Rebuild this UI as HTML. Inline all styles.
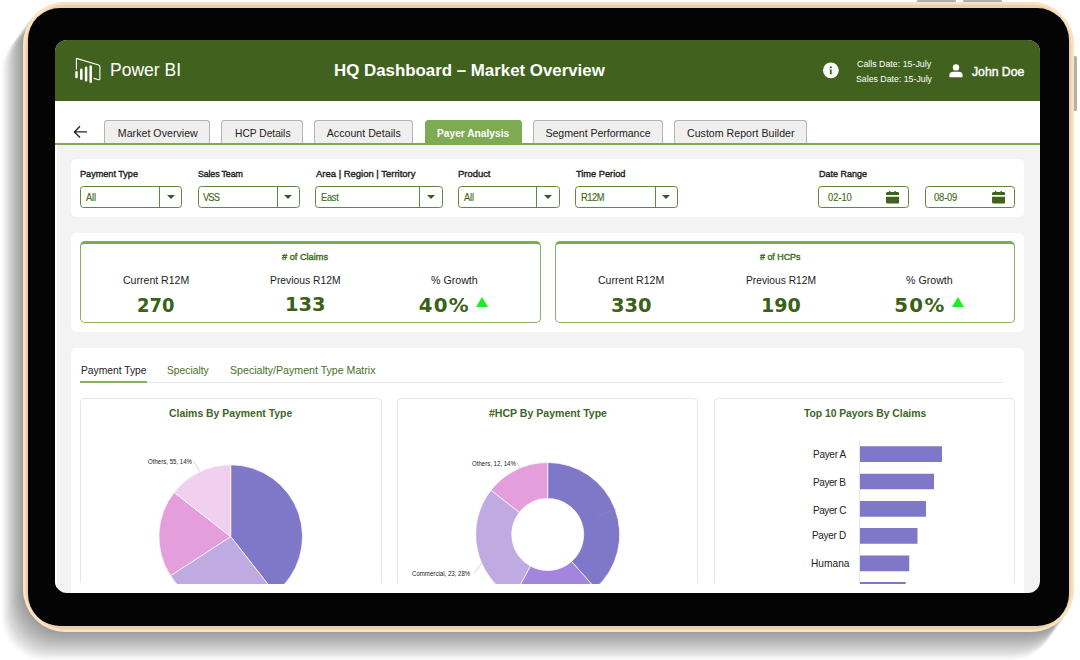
<!DOCTYPE html>
<html lang="en">
<head>
<meta charset="utf-8">
<title>HQ Dashboard – Market Overview</title>
<style>

html,body{margin:0;padding:0;background:#fff}
body{width:1080px;height:660px;position:relative;overflow:hidden;font-family:"Liberation Sans", sans-serif;}
.abs{position:absolute}
.btn{position:absolute;background:#b0b0b0}
.tablet{position:absolute;left:22.5px;top:2px;width:1051.5px;height:629.5px;border-radius:43px;background:#e9d1ae;
  box-shadow:inset 0 0 0 2.6px #fae2c1,-1.4px 1.9px 1.5px rgba(0,0,0,.033),-2.9px 3.9px 1.5px rgba(0,0,0,.033),-4.3px 5.8px 1.5px rgba(0,0,0,.033),-5.8px 7.8px 1.5px rgba(0,0,0,.033),-7.2px 9.8px 1.5px rgba(0,0,0,.033),-8.7px 11.7px 1.5px rgba(0,0,0,.033),-10.2px 13.7px 1.5px rgba(0,0,0,.033),-11.6px 15.6px 1.5px rgba(0,0,0,.033),-13.0px 17.6px 1.5px rgba(0,0,0,.033),-14.5px 19.5px 1.5px rgba(0,0,0,.033),-15.9px 21.4px 1.5px rgba(0,0,0,.033),-17.4px 23.4px 1.5px rgba(0,0,0,.033),-18.8px 25.3px 1.5px rgba(0,0,0,.033),-20.3px 27.3px 1.5px rgba(0,0,0,.033);}
.bezel{position:absolute;left:27.5px;top:7.5px;width:1041.5px;height:618.5px;border-radius:32px;background:#040404}
.screen{position:absolute;left:55px;top:40px;width:985px;height:553px;border-radius:12px;overflow:hidden;background:#f3f3f3}
.screen *{box-sizing:border-box}
.tx{position:absolute;white-space:nowrap;line-height:1;margin:0;padding:0;transform-origin:0 50%}
.hdr{position:absolute;left:0;top:0;width:985px;height:60.7px;background:#41621f}
.nav{position:absolute;left:0;top:60.7px;width:985px;height:44px;background:#fff}
.navline{position:absolute;left:0;top:103px;width:985px;height:2px;background:#7dab52}
.tab{position:absolute;top:80px;height:24px;border:1px solid #b3b3b3;border-bottom:none;border-radius:3.5px 3.5px 0 0;background:#f0efee}
.tab.on{background:#7dab52;border-color:#7dab52}
.card{position:absolute;background:#fff;border-radius:5px}
.dd{position:absolute;top:146.3px;height:21.6px;border:1px solid #5d8a3a;border-radius:3.5px;background:#fff}
.dd i{position:absolute;top:0;bottom:0;width:1px;background:#5d8a3a}
.dd b{position:absolute;width:0;height:0;border-left:4.1px solid transparent;border-right:4.1px solid transparent;border-top:4.7px solid #3a5c1c}
.kpi{position:absolute;top:200.5px;height:82.2px;border:1px solid #86b15f;border-top:3px solid #7dab52;border-radius:5px;background:#fff}
.tri{position:absolute;width:0;height:0;border-left:6px solid transparent;border-right:6px solid transparent;border-bottom:10px solid #1fee1f}
.chart{position:absolute;top:358.0px;height:185.0px;border:1px solid #e6e6e6;border-bottom:none;border-radius:5px 5px 0 0;background:#fff}

</style>
</head>
<body>
<div class="btn" style="left:917px;top:0;width:39px;height:4px;border-radius:1px"></div>
<div class="btn" style="left:963.3px;top:0;width:39px;height:4px;border-radius:1px"></div>
<div class="btn" style="left:1072px;top:56px;width:4.6px;height:54.5px;border-radius:1.5px"></div>
<div class="tablet"></div><div class="bezel"></div>
<div class="screen">
<div class="hdr"></div><div class="nav"></div>
<div class="abs" style="left:0;top:105px;width:2px;height:450px;background:#fff"></div>
<div class="tab" style="left:49.00px;width:106.00px"></div>
<div class="tab" style="left:166.00px;width:81.50px"></div>
<div class="tab" style="left:259.00px;width:99.00px"></div>
<div class="tab on" style="left:370.00px;width:96.50px"></div>
<div class="tab" style="left:478.00px;width:130.00px"></div>
<div class="tab" style="left:619.00px;width:133.00px"></div>
<div class="navline"></div>
<svg class="abs" style="left:18px;top:84px" width="16" height="16" viewBox="0 0 16 16"><path d="M14 7.9H1.6M7 2.3L1.4 7.9L7 13.5" fill="none" stroke="#222" stroke-width="1.35"/></svg>
<div class="card" style="left:16.2px;top:119.3px;width:952.6px;height:57.7px"></div>
<div class="card" style="left:16.2px;top:193px;width:952.6px;height:99px"></div>
<div class="card" style="left:16.2px;top:307.5px;width:952.6px;height:260px"></div>
<div class="dd" style="left:25.00px;width:102.30px"><i style="left:78.10px"></i><b style="left:85.55px;top:7.4px"></b></div>
<div class="dd" style="left:142.70px;width:102.00px"><i style="left:78.00px"></i><b style="left:85.35px;top:7.4px"></b></div>
<div class="dd" style="left:260.40px;width:127.20px"><i style="left:102.70px"></i><b style="left:110.30px;top:7.4px"></b></div>
<div class="dd" style="left:402.60px;width:102.40px"><i style="left:77.90px"></i><b style="left:85.50px;top:7.4px"></b></div>
<div class="dd" style="left:520.00px;width:102.60px"><i style="left:78.50px"></i><b style="left:85.90px;top:7.4px"></b></div>
<div class="dd" style="left:763.20px;width:91.00px"><svg class="abs" style="left:66.80px;top:3.7px" width="13.2" height="12.6" viewBox="0 0 13.2 12.6"><path fill="#3f621d" d="M3 0h1.4v1h4.1V0h1.4v1h1.8a1.5 1.5 0 0 1 1.5 1.5V4H0V2.5A1.5 1.5 0 0 1 1.5 1H3zM0 5.8h13.2v5.3a1.5 1.5 0 0 1-1.5 1.5H1.5A1.5 1.5 0 0 1 0 11.1z"/></svg></div>
<div class="dd" style="left:869.50px;width:90.90px"><svg class="abs" style="left:66.50px;top:3.7px" width="13.2" height="12.6" viewBox="0 0 13.2 12.6"><path fill="#3f621d" d="M3 0h1.4v1h4.1V0h1.4v1h1.8a1.5 1.5 0 0 1 1.5 1.5V4H0V2.5A1.5 1.5 0 0 1 1.5 1H3zM0 5.8h13.2v5.3a1.5 1.5 0 0 1-1.5 1.5H1.5A1.5 1.5 0 0 1 0 11.1z"/></svg></div>
<div class="kpi" style="left:24.5px;width:461px"></div>
<div class="kpi" style="left:500.2px;width:460.3px"></div>
<div class="tri" style="left:421.3px;top:257px"></div>
<div class="tri" style="left:897.0px;top:257px"></div>
<div class="abs" style="left:25px;top:342.0px;width:922.5px;height:1px;background:#e6e6e6"></div>
<div class="abs" style="left:25px;top:341.0px;width:67px;height:2px;background:#86b45d"></div>
<div class="chart" style="left:25.2px;width:301.6px"></div>
<div class="chart" style="left:342.2px;width:300.7px"></div>
<div class="chart" style="left:659.0px;width:301.3px"></div>
<svg class="abs" style="left:0;top:0" width="985" height="545" viewBox="55 40 985 545">
<defs><clipPath id="cc"><rect x="55" y="390" width="985" height="194.1"/></clipPath></defs><g clip-path="url(#cc)">
<path d="M230.70 536.60L230.70 464.80A71.8 71.8 0 0 1 274.90 593.18Z" fill="#7f77c8" stroke="#fff" stroke-width="0.7" stroke-linejoin="round"/>
<path d="M230.70 536.60L274.90 593.18A71.8 71.8 0 0 1 170.48 575.71Z" fill="#c0aae2" stroke="#fff" stroke-width="0.7" stroke-linejoin="round"/>
<path d="M230.70 536.60L170.48 575.71A71.8 71.8 0 0 1 174.12 492.40Z" fill="#e49edc" stroke="#fff" stroke-width="0.7" stroke-linejoin="round"/>
<path d="M230.70 536.60L174.12 492.40A71.8 71.8 0 0 1 230.70 464.80Z" fill="#f1cfef" stroke="#fff" stroke-width="0.7" stroke-linejoin="round"/>
<path d="M547.70 498.50L547.70 462.50A72 72 0 0 1 595.41 588.42L571.55 561.46A36 36 0 0 0 547.70 498.50Z" fill="#7f77c8" stroke="#fff" stroke-width="0.7" stroke-linejoin="round"/>
<path d="M571.55 561.46L595.41 588.42A72 72 0 0 1 513.12 597.65L530.41 566.08A36 36 0 0 0 571.55 561.46Z" fill="#a384df" stroke="#fff" stroke-width="0.7" stroke-linejoin="round"/>
<path d="M530.41 566.08L513.12 597.65A72 72 0 0 1 490.96 490.17L519.33 512.34A36 36 0 0 0 530.41 566.08Z" fill="#c0aae2" stroke="#fff" stroke-width="0.7" stroke-linejoin="round"/>
<path d="M519.33 512.34L490.96 490.17A72 72 0 0 1 547.70 462.50L547.70 498.50A36 36 0 0 0 519.33 512.34Z" fill="#e49edc" stroke="#fff" stroke-width="0.7" stroke-linejoin="round"/>
<path d="M193.5 460.6L199.4 471.3M517 462.6L520.3 469L523.6 484.4M474 573.3L495 545.3" fill="none" stroke="#b9b9b9" stroke-width="0.6"/>
<path d="M598.5 515.3L617 508.8" fill="none" stroke="#9a93d6" stroke-width="0.5" stroke-dasharray="1.5 1"/>
<rect x="859.2" y="440.5" width="1" height="150" fill="#e2e2e2"/>
<rect x="860" y="446.25" width="82.00" height="15.75" fill="#7f77c8"/>
<rect x="860" y="473.75" width="74.00" height="15.50" fill="#7f77c8"/>
<rect x="860" y="501" width="66.00" height="15.75" fill="#7f77c8"/>
<rect x="860" y="528" width="57.50" height="15.75" fill="#7f77c8"/>
<rect x="860" y="555.5" width="49.25" height="15.75" fill="#7f77c8"/>
<rect x="860" y="582" width="45.75" height="8.00" fill="#7f77c8"/>
</g></svg>
<svg class="abs" style="left:15px;top:14px" width="36" height="32" viewBox="70 54 36 32"><g fill="none" stroke="#fff" stroke-linecap="round" stroke-linejoin="round"><path d="M76.4 69.2V58.4L98.6 65Q99.9 65.4 99.9 66.8V78.6Q99.9 80.2 98.4 79.7L94 78.4" stroke-width="1.1"/><path d="M76.5 72.2V77M81.3 69.8V78.8M86.1 67.8V80.2M90.7 66.6V81.8" stroke-width="2.5"/></g></svg>
<svg class="abs" style="left:767px;top:22px" width="18" height="17" viewBox="0 0 18 17"><circle cx="8.9" cy="8.3" r="7.9" fill="#fff"/><circle cx="8.8" cy="5.3" r="1.15" fill="#41621f"/><path d="M7.6 7.5h2.1v4.8H7.9V8.6H7.6z" fill="#41621f"/></svg>
<svg class="abs" style="left:894px;top:23.5px" width="14" height="14" viewBox="0 0 14 14"><circle cx="7" cy="3.4" r="3.2" fill="#fff"/><path d="M0.4 13.2v-1.9a3.6 3.6 0 0 1 3.6-3.6h6a3.6 3.6 0 0 1 3.6 3.6v1.9z" fill="#fff"/></svg>
<span class="tx" style="left:55.20px;top:21.12px;font-size:18.4px;letter-spacing:0.000px;color:#fff;transform:scaleX(0.9528)">Power BI</span>
<span class="tx" style="left:279.00px;top:22.44px;font-size:17.2px;letter-spacing:0.000px;color:#fff;transform:scaleX(0.9809);font-weight:700">HQ Dashboard – Market Overview</span>
<span class="tx" style="left:801.70px;top:18.79px;font-size:9.7px;letter-spacing:0.000px;color:#fff;transform:scaleX(0.9113)">Calls Date: 15-July</span>
<span class="tx" style="left:800.50px;top:33.99px;font-size:9.7px;letter-spacing:0.000px;color:#fff;transform:scaleX(0.9048)">Sales Date: 15-July</span>
<span class="tx" style="left:916.80px;top:24.90px;font-size:13px;letter-spacing:0.000px;color:#fff;transform:scaleX(0.9379);-webkit-text-stroke:0.45px #fff">John Doe</span>
<span class="tx" style="left:62.80px;top:87.73px;font-size:10.6px;letter-spacing:0.035px;color:#222">Market Overview</span>
<span class="tx" style="left:179.50px;top:87.73px;font-size:10.6px;letter-spacing:0.000px;color:#222;transform:scaleX(0.9652)">HCP Details</span>
<span class="tx" style="left:271.75px;top:87.73px;font-size:10.6px;letter-spacing:0.026px;color:#222">Account Details</span>
<span class="tx" style="left:382.20px;top:87.73px;font-size:10.6px;letter-spacing:0.000px;color:#fff;transform:scaleX(0.9627);font-weight:700">Payer Analysis</span>
<span class="tx" style="left:490.50px;top:87.73px;font-size:10.6px;letter-spacing:-0.053px;color:#222">Segment Performance</span>
<span class="tx" style="left:632.00px;top:87.73px;font-size:10.6px;letter-spacing:0.016px;color:#222">Custom Report Builder</span>
<span class="tx" style="left:25.40px;top:128.92px;font-size:9.9px;letter-spacing:0.000px;color:#1e1e1e;transform:scaleX(0.9213);-webkit-text-stroke:0.4px #1e1e1e">Payment Type</span>
<span class="tx" style="left:143.20px;top:128.92px;font-size:9.9px;letter-spacing:-0.176px;color:#1e1e1e;transform:scaleX(0.9000);-webkit-text-stroke:0.4px #1e1e1e">Sales Team</span>
<span class="tx" style="left:260.50px;top:128.92px;font-size:9.9px;letter-spacing:0.000px;color:#1e1e1e;transform:scaleX(0.9590);-webkit-text-stroke:0.4px #1e1e1e">Area | Region | Territory</span>
<span class="tx" style="left:403.00px;top:128.92px;font-size:9.9px;letter-spacing:0.000px;color:#1e1e1e;transform:scaleX(0.9546);-webkit-text-stroke:0.4px #1e1e1e">Product</span>
<span class="tx" style="left:520.50px;top:128.92px;font-size:9.9px;letter-spacing:0.000px;color:#1e1e1e;transform:scaleX(0.9362);-webkit-text-stroke:0.4px #1e1e1e">Time Period</span>
<span class="tx" style="left:763.60px;top:128.92px;font-size:9.9px;letter-spacing:0.000px;color:#1e1e1e;transform:scaleX(0.9108);-webkit-text-stroke:0.4px #1e1e1e">Date Range</span>
<span class="tx" style="left:31.00px;top:153.00px;font-size:10.4px;letter-spacing:-0.150px;color:#3f6b20;transform:scaleX(0.9000);-webkit-text-stroke:0.15px #3f6b20">All</span>
<span class="tx" style="left:148.30px;top:153.00px;font-size:10.4px;letter-spacing:-1.006px;color:#3f6b20;transform:scaleX(0.9000);-webkit-text-stroke:0.15px #3f6b20">VSS</span>
<span class="tx" style="left:266.25px;top:153.00px;font-size:10.4px;letter-spacing:-0.338px;color:#3f6b20;transform:scaleX(0.9000);-webkit-text-stroke:0.15px #3f6b20">East</span>
<span class="tx" style="left:408.75px;top:153.00px;font-size:10.4px;letter-spacing:-0.150px;color:#3f6b20;transform:scaleX(0.9000);-webkit-text-stroke:0.15px #3f6b20">All</span>
<span class="tx" style="left:526.25px;top:153.00px;font-size:10.4px;letter-spacing:-0.541px;color:#3f6b20;transform:scaleX(0.9000);-webkit-text-stroke:0.15px #3f6b20">R12M</span>
<span class="tx" style="left:772.70px;top:153.00px;font-size:10.4px;letter-spacing:-0.049px;color:#3f6b20;transform:scaleX(0.9000);-webkit-text-stroke:0.15px #3f6b20">02-10</span>
<span class="tx" style="left:878.90px;top:153.00px;font-size:10.4px;letter-spacing:-0.182px;color:#3f6b20;transform:scaleX(0.9000);-webkit-text-stroke:0.15px #3f6b20">08-09</span>
<span class="tx" style="left:227.00px;top:212.07px;font-size:9.6px;letter-spacing:0.000px;color:#3f6b20;transform:scaleX(0.9586);-webkit-text-stroke:0.4px #3f6b20"># of Claims</span>
<span class="tx" style="left:705.00px;top:212.07px;font-size:9.6px;letter-spacing:0.000px;color:#3f6b20;transform:scaleX(0.9260);-webkit-text-stroke:0.4px #3f6b20"># of HCPs</span>
<span class="tx" style="left:67.50px;top:235.09px;font-size:11px;letter-spacing:0.000px;color:#222;transform:scaleX(0.9591)">Current R12M</span>
<span class="tx" style="left:214.50px;top:235.09px;font-size:11px;letter-spacing:0.000px;color:#222;transform:scaleX(0.9375)">Previous R12M</span>
<span class="tx" style="left:375.75px;top:235.09px;font-size:11px;letter-spacing:0.000px;color:#222;transform:scaleX(0.9680)">% Growth</span>
<span class="tx" style="left:543.00px;top:235.09px;font-size:11px;letter-spacing:0.000px;color:#222;transform:scaleX(0.9591)">Current R12M</span>
<span class="tx" style="left:690.50px;top:235.09px;font-size:11px;letter-spacing:0.000px;color:#222;transform:scaleX(0.9308)">Previous R12M</span>
<span class="tx" style="left:851.25px;top:235.09px;font-size:11px;letter-spacing:0.000px;color:#222;transform:scaleX(0.9680)">% Growth</span>
<span class="tx" style="left:82.45px;top:256.34px;font-size:19.8px;letter-spacing:0.000px;color:#3a6118;transform:scaleX(0.9044);font-weight:700;font-family:'DejaVu Sans', 'Liberation Sans', sans-serif">270</span>
<span class="tx" style="left:229.95px;top:255.24px;font-size:19.8px;letter-spacing:0.000px;color:#3a6118;transform:scaleX(0.9831);font-weight:700;font-family:'DejaVu Sans', 'Liberation Sans', sans-serif">133</span>
<span class="tx" style="left:363.70px;top:255.54px;font-size:19.8px;letter-spacing:1.247px;color:#3a6118;font-weight:700;font-family:'DejaVu Sans', 'Liberation Sans', sans-serif">40%</span>
<span class="tx" style="left:556.20px;top:255.54px;font-size:19.8px;letter-spacing:0.000px;color:#3a6118;transform:scaleX(0.9831);font-weight:700;font-family:'DejaVu Sans', 'Liberation Sans', sans-serif">330</span>
<span class="tx" style="left:705.70px;top:255.54px;font-size:19.8px;letter-spacing:0.000px;color:#3a6118;transform:scaleX(0.9650);font-weight:700;font-family:'DejaVu Sans', 'Liberation Sans', sans-serif">190</span>
<span class="tx" style="left:839.20px;top:255.54px;font-size:19.8px;letter-spacing:1.330px;color:#3a6118;font-weight:700;font-family:'DejaVu Sans', 'Liberation Sans', sans-serif">50%</span>
<span class="tx" style="left:25.80px;top:324.89px;font-size:11px;letter-spacing:0.000px;color:#222;transform:scaleX(0.9340)">Payment Type</span>
<span class="tx" style="left:112.20px;top:324.89px;font-size:11px;letter-spacing:0.000px;color:#47702a;transform:scaleX(0.9341)">Specialty</span>
<span class="tx" style="left:174.50px;top:324.89px;font-size:11px;letter-spacing:0.000px;color:#47702a;transform:scaleX(0.9648)">Specialty/Payment Type Matrix</span>
<span class="tx" style="left:114.00px;top:367.87px;font-size:11.5px;letter-spacing:0.000px;color:#3d661f;transform:scaleX(0.9063);font-weight:700">Claims By Payment Type</span>
<span class="tx" style="left:433.70px;top:367.87px;font-size:11.5px;letter-spacing:0.000px;color:#3d661f;transform:scaleX(0.9169);font-weight:700">#HCP By Payment Type</span>
<span class="tx" style="left:748.60px;top:367.87px;font-size:11.5px;letter-spacing:-0.039px;color:#3d661f;transform:scaleX(0.9000);font-weight:700">Top 10 Payors By Claims</span>
<span class="tx" style="left:757.50px;top:408.70px;font-size:11.1px;letter-spacing:-0.313px;color:#222;transform:scaleX(0.9000)">Payer A</span>
<span class="tx" style="left:758.40px;top:437.10px;font-size:11.1px;letter-spacing:-0.464px;color:#222;transform:scaleX(0.9000)">Payer B</span>
<span class="tx" style="left:757.50px;top:465.10px;font-size:11.1px;letter-spacing:-0.471px;color:#222;transform:scaleX(0.9000)">Payer C</span>
<span class="tx" style="left:756.70px;top:490.20px;font-size:11.1px;letter-spacing:-0.344px;color:#222;transform:scaleX(0.9000)">Payer D</span>
<span class="tx" style="left:755.75px;top:518.20px;font-size:11.1px;letter-spacing:0.000px;color:#222;transform:scaleX(0.9180)">Humana</span>
<span class="tx" style="left:93.00px;top:418.87px;font-size:6.3px;letter-spacing:0.000px;color:#222;transform:scaleX(0.9667)">Others, 55, 14%</span>
<span class="tx" style="left:416.50px;top:420.87px;font-size:6.3px;letter-spacing:0.000px;color:#222;transform:scaleX(0.9645)">Others, 12, 14%</span>
<span class="tx" style="left:357.20px;top:531.27px;font-size:6.3px;letter-spacing:0.000px;color:#222;transform:scaleX(0.9684)">Commercial, 23, 28%</span>
</div>
</body>
</html>
